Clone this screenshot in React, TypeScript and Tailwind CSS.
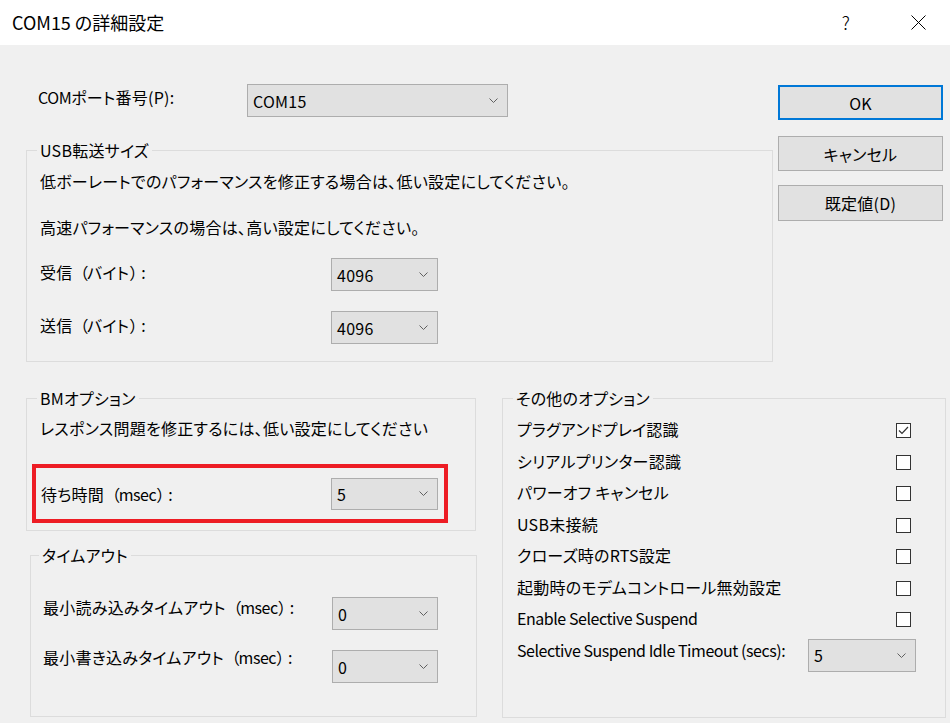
import React from "react";

function Chevron() {
  return (
    <svg width="9" height="5" viewBox="0 0 9 5" className="shrink-0">
      <path d="M0.5 0.5 L4.5 4.5 L8.5 0.5" fill="none" stroke="#606060" strokeWidth="1" />
    </svg>
  );
}

function Combo({ value, className }: { value: string; className: string }) {
  return (
    <div
      className={
        "flex shrink-0 items-center justify-between border border-[#adadad] bg-[#e1e1e1] pl-[5px] pr-[9px] " +
        className
      }
    >
      <span>{value}</span>
      <Chevron />
    </div>
  );
}

function Button({ label, primary, className }: { label: string; primary?: boolean; className: string }) {
  return (
    <div
      className={
        "flex items-center justify-center bg-[#e1e1e1] " +
        (primary ? "border-2 border-[#0078d7] " : "border border-[#adadad] ") +
        className
      }
    >
      {label}
    </div>
  );
}

function Check({ checked }: { checked?: boolean }) {
  return (
    <div className="mr-[5px] flex h-[15px] w-[15px] items-center justify-center border border-[#333333] bg-white">
      {checked && (
        <svg width="11" height="9" viewBox="0 0 11 9">
          <path d="M1 4.5 L4 7.5 L10 1" fill="none" stroke="#333333" strokeWidth="1.2" />
        </svg>
      )}
    </div>
  );
}

// full-width brackets, without the proportional squeeze
function Open() {
  return <span className="tracking-[-1.5px] [font-feature-settings:normal]">（</span>;
}

function Close() {
  return <span className="tracking-[-4px] [font-feature-settings:normal]">）</span>;
}

function Latin({ children }: { children: React.ReactNode }) {
  return <span className="tracking-[-0.45px]">{children}</span>;
}

const options: { label: React.ReactNode; key: string; checked?: boolean }[] = [
  { key: "pnp", label: "プラグアンドプレイ認識", checked: true },
  { key: "printer", label: "シリアルプリンター認識" },
  { key: "power", label: "パワーオフ キャンセル" },
  { key: "usb", label: "USB未接続" },
  { key: "rts", label: "クローズ時のRTS設定" },
  { key: "modem", label: "起動時のモデムコントロール無効設定" },
  { key: "suspend", label: <Latin>Enable Selective Suspend</Latin> },
];

export default function App() {
  return (
    <div className="h-[723px] w-[950px] overflow-hidden bg-[#f0f0f0] font-['Noto_Sans_CJK_JP',sans-serif] text-[16px] leading-[22px] tracking-[0.25px] text-black [font-feature-settings:'palt']">
      {/* title bar */}
      <div className="flex h-[45px] items-center bg-white pb-[2px] pl-[12px]">
        <span className="text-[18px] tracking-normal">COM15 の詳細設定</span>
        <span className="ml-auto text-[18px] font-light">?</span>
        <svg width="15" height="15" viewBox="0 0 15 15" className="ml-[61px] mr-[24px] mt-[2px]">
          <path d="M0.5 0.5 L14.5 14.5 M14.5 0.5 L0.5 14.5" stroke="#000" strokeWidth="1" />
        </svg>
      </div>

      {/* top section */}
      <div className="flex">
        <div className="ml-[26px] w-[747px] pt-[39px]">
          <div className="flex h-[33px] items-start pl-[12px]">
            <span className="mt-[2px] w-[209px]">
              <Latin>COM</Latin>ポート番号(P):
            </span>
            <Combo value="COM15" className="h-[33px] w-[261px]" />
          </div>
          <fieldset className="mt-[22px] h-[223px] border border-[#dcdcdc]">
            <legend className="ml-[10px] px-[3px]">USB転送サイズ</legend>
            <div className="pl-[13px]">
              <div className="mt-[9px]">低ボーレートでのパフォーマンスを修正する場合は、低い設定にしてください。</div>
              <div className="mt-[24px]">高速パフォーマンスの場合は、高い設定にしてください。</div>
              <div className="mt-[20px] flex items-start">
                <span className="mt-[3px] w-[291px]">
                  受信<Open />バイト<Close />:
                </span>
                <Combo value="4096" className="h-[33px] w-[107px]" />
              </div>
              <div className="mt-[20px] flex items-start">
                <span className="mt-[3px] w-[291px]">
                  送信<Open />バイト<Close />:
                </span>
                <Combo value="4096" className="h-[33px] w-[107px]" />
              </div>
            </div>
          </fieldset>
        </div>
        <div className="ml-[5px] flex w-[165px] flex-col pt-[40px]">
          <Button label="OK" primary className="h-[35px]" />
          <Button label="キャンセル" className="mt-[16px] h-[35px]" />
          <Button label="既定値(D)" className="mt-[14px] h-[36px]" />
        </div>
      </div>

      {/* bottom section */}
      <div className="mt-[25px] flex items-start">
        <div className="ml-[26px] w-[451px]">
          <fieldset className="h-[144px] w-[450px] border border-[#dcdcdc]">
            <legend className="ml-[10px] px-[3px]">BMオプション</legend>
            <div className="mt-[8px] pl-[13px]">レスポンス問題を修正するには、低い設定にしてください</div>
            <div className="ml-[5px] mt-[25px] flex h-[59px] w-[416px] items-center border-4 border-[#ed1c24] pl-[5px]">
              <span className="w-[290px]">
                待ち時間<Open />
                <Latin>msec</Latin>
                <Close />:
              </span>
              <Combo value="5" className="h-[32px] w-[107px]" />
            </div>
          </fieldset>
          <fieldset className="ml-[4px] mt-[13px] h-[173px] w-[447px] border border-[#dcdcdc]">
            <legend className="ml-[8px] px-[3px]">タイムアウト</legend>
            <div className="pl-[12px]">
              <div className="mt-[30px] flex items-start">
                <span className="w-[289px]">
                  最小読み込みタイムアウト<Open />
                  <Latin>msec</Latin>
                  <Close />:
                </span>
                <Combo value="0" className="mt-[1px] h-[33px] w-[106px]" />
              </div>
              <div className="mt-[16px] flex items-start">
                <span className="w-[289px]">
                  最小書き込みタイムアウト<Open />
                  <Latin>msec</Latin>
                  <Close />:
                </span>
                <Combo value="0" className="mt-[4px] h-[33px] w-[106px]" />
              </div>
            </div>
          </fieldset>
        </div>
        <fieldset className="ml-[25px] h-[331px] w-[444px] border border-[#dcdcdc]">
          <legend className="ml-[10px] px-[3px]">その他のオプション</legend>
          <div className="mt-[6px] pl-[14px] pr-[29px]">
            {options.map((o) => (
              <div key={o.key} className="flex h-[31.5px] items-center justify-between">
                <span className="pb-[3px]">{o.label}</span>
                <Check checked={o.checked} />
              </div>
            ))}
            <div className="mt-[3px] flex items-start">
              <span className="w-[291px]">
                <Latin>Selective Suspend Idle Timeout (secs):</Latin>
              </span>
              <Combo value="5" className="h-[33px] w-[108px]" />
            </div>
          </div>
        </fieldset>
      </div>
    </div>
  );
}
